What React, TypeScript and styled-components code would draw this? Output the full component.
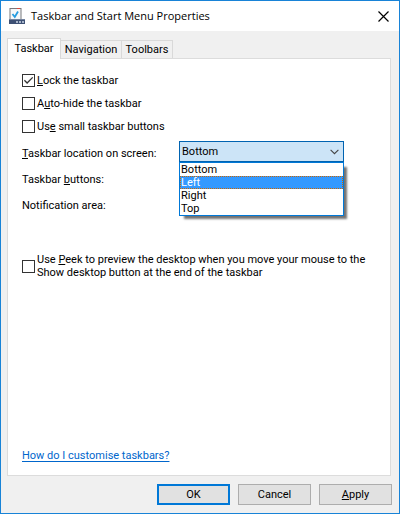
import React, { useState } from "react";
import styled, { createGlobalStyle } from "styled-components";

const GlobalStyle = createGlobalStyle`
  *, *::before, *::after { box-sizing: border-box; }
  body {
    margin: 0;
    background: #f0f0f0;
    color: #000;
    font: 11px/13px Tahoma, Roboto, sans-serif;
  }
  button, select { font: inherit; color: inherit; }
`;

const Window = styled.main`
  display: flex;
  flex-direction: column;
  min-height: 100vh;
  border: 1px solid #1883d7;
  background: #f0f0f0;
`;

const TitleBar = styled.header`
  display: flex;
  align-items: center;
  height: 30px;
  padding: 0 8px;
  background: #fff;
`;

const Title = styled.h1`
  flex: 1;
  margin: 0 0 0 5px;
  font: 400 11px/16px "Segoe UI", "Open Sans", sans-serif;
  white-space: nowrap;
`;

const CloseButton = styled.button`
  display: flex;
  padding: 2px;
  border: 0;
  background: transparent;
`;

const Body = styled.div`
  display: flex;
  flex: 1;
  flex-direction: column;
  padding: 7px 7px 8px 6px;
`;

const TabList = styled.div`
  display: flex;
  align-items: flex-end;
`;

const Tab = styled.button<{ $width: number }>`
  width: ${(p) => p.$width}px;
  height: 18px;
  padding: 0;
  border: 1px solid #d9d9d9;
  border-width: 1px 1px 0 0;
  background: #f0f0f0;
  line-height: 17px;
  text-align: center;
  white-space: nowrap;

  &[aria-selected="true"] {
    z-index: 1;
    height: 21px;
    margin-bottom: -1px;
    padding-bottom: 2px;
    border-left-width: 1px;
    background: #fff;
  }
`;

const Panel = styled.section`
  display: flex;
  flex: 1;
  flex-direction: column;
  align-items: flex-start;
  margin-right: 1px;
  padding: 15px 14px 13px;
  border: 1px solid #dcdcdc;
  background: #fff;
`;

const CheckList = styled.div`
  display: grid;
  gap: 10px;
`;

const CheckLabel = styled.label`
  display: flex;
  align-items: center;
  gap: 2px;
  white-space: nowrap;
`;

const Box = styled.input`
  flex: none;
  width: 13px;
  height: 13px;
  margin: 0;
  appearance: none;
  border: 1px solid #333;
  background: #fff;

  &:checked {
    background: #fff
      url("data:image/svg+xml,%3Csvg xmlns='http://www.w3.org/2000/svg' viewBox='0 0 11 11'%3E%3Cpath d='M1.4 5.3 4.1 8 9.7 2.4' fill='none' stroke='%23333' stroke-width='1.3'/%3E%3C/svg%3E");
  }
`;

const Key = styled.span`
  text-decoration: underline;
  text-decoration-thickness: 1px;
  text-underline-offset: 1px;
  text-decoration-skip-ink: none;
`;

const Fields = styled.div`
  display: grid;
  grid-template-columns: 157px minmax(0, 165px);
  grid-auto-rows: 26px;
  align-items: center;
  width: 100%;
  margin: 7px 0 35px;
`;

const FieldName = styled.label`
  grid-column: 1;
  white-space: nowrap;
`;

const Combo = styled.div`
  position: relative;
  grid-column: 2;
  align-self: start;
  margin-top: 1px;
`;

const Select = styled.select`
  display: block;
  width: 100%;
  height: 21px;
  padding: 0 2px;
  appearance: none;
  border: 1px solid #0063b1;
  border-radius: 0;
  outline: 0;
  background: #cce4f7
    url("data:image/svg+xml,%3Csvg xmlns='http://www.w3.org/2000/svg' width='9' height='6' viewBox='0 0 9 6'%3E%3Cpath d='M.6.8 4.5 4.7 8.4.8' fill='none' stroke='%23444' stroke-width='1.1'/%3E%3C/svg%3E")
    no-repeat right 4px center;
`;

const Options = styled.ul`
  position: absolute;
  z-index: 2;
  top: 100%;
  left: 0;
  width: 100%;
  margin: 0;
  padding: 0;
  border: 1px solid #0078d7;
  background: #fff;
  box-shadow: 4px 4px 2px -1px rgba(0, 0, 0, 0.55);
  list-style: none;
`;

const Option = styled.li`
  height: 13px;
  padding: 0 1px;

  &[aria-selected="true"] {
    padding: 0;
    border: 1px dotted #cc6600;
    background: #3399ff;
    color: #fff;
    line-height: 11px;
  }
`;

const HelpLink = styled.a`
  margin-top: auto;
  color: #0066cc;
  text-underline-offset: 2px;
  text-decoration-skip-ink: none;
`;

const Actions = styled.footer`
  display: flex;
  justify-content: flex-end;
  gap: 8px;
  margin-top: 8px;
`;

const Action = styled.button<{ $primary?: boolean }>`
  width: 73px;
  height: 21px;
  padding: 0;
  border: ${(p) => (p.$primary ? "2px solid #0078d7" : "1px solid #adadad")};
  background: #e1e1e1;
`;

const TaskbarIcon = () => (
  <svg width="17" height="17" viewBox="0 0 17 17" aria-hidden="true">
    <rect x="1" y=".5" width="11" height="12" fill="#f5f7fa" stroke="#77787c" />
    <path d="M8 .5h3" stroke="#d9483b" />
    <path d="m3.5 6 2.3 3L9 3.5" fill="none" stroke="#259be0" strokeWidth="1.8" />
    <path d="M0 11h16v5H0z" fill="#3d5074" />
    <path d="M0 11.5h16" stroke="#71819d" />
    <path d="M7 13h2v2H7zm3 0h2v2h-2zm3 0h2v2h-2z" fill="#a6b3c8" />
  </svg>
);

const CloseIcon = () => (
  <svg width="11" height="11" viewBox="0 0 11 11" aria-hidden="true">
    <path d="m.5.5 10 10m0-10-10 10" stroke="#000" strokeWidth="1.2" />
  </svg>
);

const tabs = [
  { name: "Taskbar", width: 54 },
  { name: "Navigation", width: 61 },
  { name: "Toolbars", width: 51 },
];
const locations = ["Bottom", "Left", "Right", "Top"];

export default function App() {
  const [tab, setTab] = useState("Taskbar");
  const [location, setLocation] = useState("Bottom");
  const [hovered, setHovered] = useState("Left");

  return (
    <>
      <GlobalStyle />
      <Window>
        <TitleBar>
          <TaskbarIcon />
          <Title>Taskbar and Start Menu Properties</Title>
          <CloseButton aria-label="Close"><CloseIcon /></CloseButton>
        </TitleBar>
        <Body>
          <TabList role="tablist">
            {tabs.map(({ name, width }) => (
              <Tab key={name} role="tab" $width={width} aria-selected={tab === name} onClick={() => setTab(name)}>
                {name}
              </Tab>
            ))}
          </TabList>
          <Panel role="tabpanel" aria-label={tab}>
            <CheckList>
              <CheckLabel><Box type="checkbox" defaultChecked /><span><Key>L</Key>ock the taskbar</span></CheckLabel>
              <CheckLabel><Box type="checkbox" /><span>A<Key>u</Key>to-hide the taskbar</span></CheckLabel>
              <CheckLabel><Box type="checkbox" /><span>Us<Key>e</Key> small taskbar buttons</span></CheckLabel>
            </CheckList>
            <Fields>
              <FieldName htmlFor="location"><Key>T</Key>askbar location on screen:</FieldName>
              <Combo>
                <Select id="location" value={location} onChange={(e) => setLocation(e.target.value)}>
                  {locations.map((name) => <option key={name}>{name}</option>)}
                </Select>
                <Options role="listbox" aria-label="Taskbar location on screen">
                  {locations.map((name) => (
                    <Option
                      key={name}
                      role="option"
                      aria-selected={hovered === name}
                      onMouseEnter={() => setHovered(name)}
                      onClick={() => setLocation(name)}
                    >
                      {name}
                    </Option>
                  ))}
                </Options>
              </Combo>
              <FieldName as="span">Taskbar <Key>b</Key>uttons:</FieldName>
              <FieldName as="span">Notification area:</FieldName>
            </Fields>
            <CheckLabel>
              <Box type="checkbox" />
              <span>
                Use <Key>P</Key>eek to preview the desktop when you move your mouse to the
                <br />
                Show desktop button at the end of the taskbar
              </span>
            </CheckLabel>
            <HelpLink href="#help">How do I customise taskbars?</HelpLink>
          </Panel>
          <Actions>
            <Action $primary>OK</Action>
            <Action>Cancel</Action>
            <Action><Key>A</Key>pply</Action>
          </Actions>
        </Body>
      </Window>
    </>
  );
}
